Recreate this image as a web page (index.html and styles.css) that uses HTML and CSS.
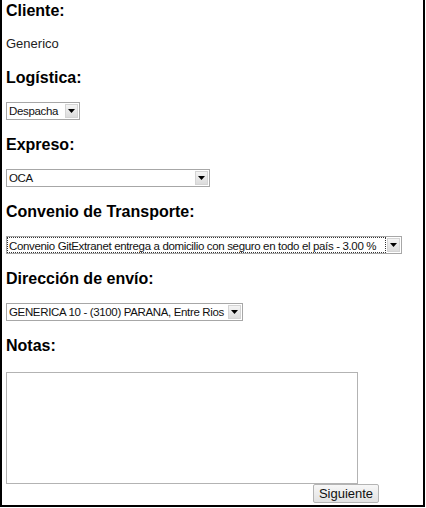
FILE: index.html
```html
<!DOCTYPE html>
<html lang="es">
<head>
<meta charset="utf-8">
<title>Pedido</title>
<link rel="stylesheet" href="styles.css">
</head>
<body>
<div class="page">
  <section class="field">
    <h3 class="label">Cliente:</h3>
    <p class="value">Generico</p>
  </section>
  <section class="field">
    <h3 class="label">Logística:</h3>
    <div class="combo w-logistica">
      <select class="combo-input"><option>Despacha</option></select>
      <span class="combo-arrow"><svg width="7" height="4" viewBox="0 0 7 4"><path d="M0 0H7L3.5 4Z" fill="#000"/></svg></span>
    </div>
  </section>
  <section class="field">
    <h3 class="label">Expreso:</h3>
    <div class="combo w-expreso">
      <select class="combo-input"><option>OCA</option></select>
      <span class="combo-arrow"><svg width="7" height="4" viewBox="0 0 7 4"><path d="M0 0H7L3.5 4Z" fill="#000"/></svg></span>
    </div>
  </section>
  <section class="field">
    <h3 class="label">Convenio de Transporte:</h3>
    <div class="combo w-convenio focused">
      <select class="combo-input"><option>Convenio GitExtranet entrega a domicilio con seguro en todo el país - 3.00 %</option></select>
      <span class="combo-arrow"><svg width="7" height="4" viewBox="0 0 7 4"><path d="M0 0H7L3.5 4Z" fill="#000"/></svg></span>
    </div>
  </section>
  <section class="field">
    <h3 class="label">Dirección de envío:</h3>
    <div class="combo w-direccion">
      <select class="combo-input"><option>GENERICA 10 - (3100) PARANA, Entre Rios</option></select>
      <span class="combo-arrow"><svg width="7" height="4" viewBox="0 0 7 4"><path d="M0 0H7L3.5 4Z" fill="#000"/></svg></span>
    </div>
  </section>
  <section class="field notes">
    <h3 class="label">Notas:</h3>
    <textarea class="notes-input"></textarea>
    <div class="actions">
      <button class="btn" type="button">Siguiente</button>
    </div>
  </section>
</div>
</body>
</html>
```
FILE: styles.css
```css
html, body {
  margin: 0;
  padding: 0;
  background: #fff;
}

body {
  font-family: "Liberation Sans", Arial, sans-serif;
  color: #000;
}

.page {
  box-sizing: border-box;
  width: 425px;
  height: 507px;
  border: 2px solid #000;
  border-top: none;
  padding: 1px 0 0 4px;
}

.field {
  margin: 0 0 15px;
}

.label {
  margin: 0 0 14px;
  font-size: 16px;
  line-height: 20px;
  font-weight: bold;
}

.value {
  margin: 0;
  font-size: 13px;
  line-height: 18px;
  color: #222;
}

.combo {
  box-sizing: border-box;
  display: flex;
  align-items: stretch;
  height: 18px;
  border: 1px solid #a7a7a7;
  background: #fff;
}

.w-logistica { width: 74px; }
.w-expreso { width: 204px; }
.w-convenio { width: 396px; }
.w-direccion { width: 237px; }

.combo-input {
  flex: 1;
  min-width: 0;
  -webkit-appearance: none;
  appearance: none;
  border: none;
  outline: none;
  background: transparent;
  margin: 0;
  padding: 0 0 0 2px;
  font-family: "Liberation Sans", Arial, sans-serif;
  font-size: 11.5px;
  letter-spacing: -0.35px;
  line-height: 16px;
  height: 16px;
  color: #111;
}

.focused .combo-input {
  border: 1px dotted #333;
  margin: 0 1px 0 0;
  height: 16px;
  box-sizing: border-box;
  padding-left: 1px;
}

.combo-arrow {
  box-sizing: border-box;
  width: 13px;
  margin: 1px 1px 1px 0;
  display: flex;
  align-items: center;
  justify-content: center;
  border: 1px solid #d4d4d4;
  background: linear-gradient(#f4f4f4, #dcdcdc);
}

.notes .label {
  margin-bottom: 16px;
}

.notes-input {
  display: block;
  box-sizing: border-box;
  width: 352px;
  height: 112px;
  margin: 0;
  padding: 2px;
  border: 1px solid #b3b3b3;
  resize: none;
  font-family: "Liberation Sans", Arial, sans-serif;
  font-size: 13px;
}

.actions {
  display: flex;
  justify-content: flex-end;
  width: 373px;
}

.btn {
  box-sizing: border-box;
  width: 66px;
  height: 19px;
  margin: 0;
  padding: 0;
  border: 1px solid #b4b4b4;
  border-radius: 2px;
  background: linear-gradient(#f7f7f7, #e2e2e2);
  font-family: "Liberation Sans", Arial, sans-serif;
  font-size: 13px;
  line-height: 17px;
  color: #111;
}
```
